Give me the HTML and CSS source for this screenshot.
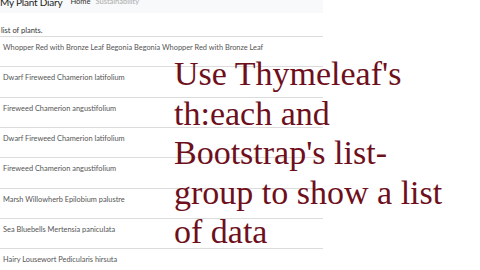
FILE: index.html
```
<!DOCTYPE html>
<html lang="en">
<head>
    <meta charset="UTF-8">
    <title>My Plant Diary</title>
    <link rel="stylesheet" href="styles.css">
</head>
<body>
    <nav class="navbar">
        <span class="brand">My Plant Diary</span>
        <a class="nav-link active">Home</a>
        <a class="nav-link">Sustainability</a>
    </nav>

    <div class="content">
        <p class="intro">list of plants.</p>
        <ul class="list-group">
            <li class="list-item">Whopper Red with Bronze Leaf Begonia Begonia Whopper Red with Bronze Leaf</li>
            <li class="list-item">Dwarf Fireweed Chamerion latifolium</li>
            <li class="list-item">Fireweed Chamerion angustifolium</li>
            <li class="list-item">Dwarf Fireweed Chamerion latifolium</li>
            <li class="list-item">Fireweed Chamerion angustifolium</li>
            <li class="list-item">Marsh Willowherb Epilobium palustre</li>
            <li class="list-item">Sea Bluebells Mertensia paniculata</li>
            <li class="list-item">Hairy Lousewort Pedicularis hirsuta</li>
        </ul>
    </div>

    <h1 class="caption">Use Thymeleaf's th:each and Bootstrap's list-group to show a list of data</h1>
</body>
</html>
```

FILE: styles.css
```
body {
    margin: 0;
    font-family: Lato, "Open Sans", sans-serif;
    background: #fff;
    position: relative;
    width: 480px;
    height: 270px;
    overflow: hidden;
}
.navbar {
    width: 323px;
    height: 13px;
    background: #f8f9fa;
    display: flex;
    align-items: flex-end;
    overflow: hidden;
}
.brand {
    font-size: 10px;
    line-height: 12px;
    letter-spacing: -0.2px;
    color: #222;
    margin-bottom: 5px;
    margin-right: 8px;
}
.nav-link {
    font-size: 7.5px;
    line-height: 10px;
    color: #333;
    margin-bottom: 6px;
    margin-right: 5px;
}
.nav-link + .nav-link {
    color: #aaa;
}
.content {
    width: 323px;
}
.intro {
    margin: 0;
    padding-top: 13px;
    padding-left: 1px;
    font-size: 7.5px;
    line-height: 10px;
    color: #333;
    height: 10px;
}
.list-group {
    list-style: none;
    margin: 0;
    padding: 0;
}
.list-item {
    border-top: 1px solid #dcdcdc;
    height: 29.33px;
    padding: 0 3px;
    font-size: 7.4px;
    line-height: 10px;
    color: #555;
}
.list-item::before {
    content: "";
    display: block;
    height: 6px;
}
.caption {
    position: absolute;
    left: 174px;
    top: 54px;
    width: 285px;
    margin: 0;
    font-family: "Liberation Serif", "Times New Roman", serif;
    font-weight: normal;
    font-size: 34px;
    line-height: 39.5px;
    color: #6e0f1c;
}
```
